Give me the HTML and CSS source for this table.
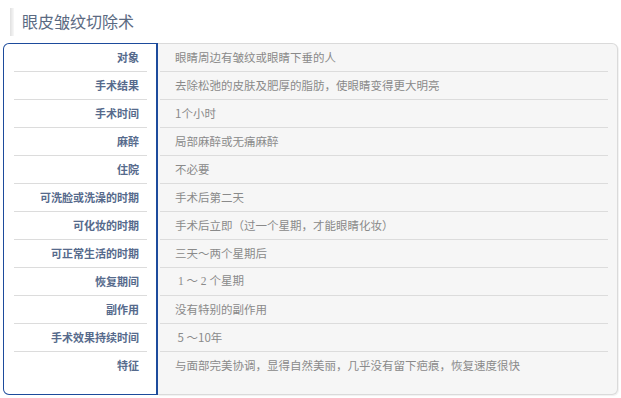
FILE: index.html
```html
<!DOCTYPE html>
<html lang="zh-CN">
<head>
<meta charset="utf-8">
<title>眼皮皱纹切除术</title>
<link rel="stylesheet" href="styles.css">
</head>
<body>
<div class="page">
  <h1 class="title">眼皮皱纹切除术</h1>
  <div class="card">
    <div class="labels">
      <div class="cell">对象</div>
      <div class="cell">手术结果</div>
      <div class="cell">手术时间</div>
      <div class="cell">麻醉</div>
      <div class="cell">住院</div>
      <div class="cell">可洗脸或洗澡的时期</div>
      <div class="cell">可化妆的时期</div>
      <div class="cell">可正常生活的时期</div>
      <div class="cell">恢复期间</div>
      <div class="cell">副作用</div>
      <div class="cell">手术效果持续时间</div>
      <div class="cell last">特征</div>
    </div>
    <div class="values">
      <div class="cell">眼睛周边有皱纹或眼睛下垂的人</div>
      <div class="cell">去除松弛的皮肤及肥厚的脂肪，使眼睛变得更大明亮</div>
      <div class="cell">1个小时</div>
      <div class="cell">局部麻醉或无痛麻醉</div>
      <div class="cell">不必要</div>
      <div class="cell">手术后第二天</div>
      <div class="cell">手术后立即（过一个星期，才能眼睛化妆）</div>
      <div class="cell">三天～两个星期后</div>
      <div class="cell serif">&nbsp;1 ～ 2 个星期</div>
      <div class="cell">没有特别的副作用</div>
      <div class="cell">&nbsp;5 ～10年</div>
      <div class="cell last">与面部完美协调，显得自然美丽，几乎没有留下疤痕，恢复速度很快</div>
    </div>
  </div>
</div>
</body>
</html>
```

FILE: styles.css
```css
* { box-sizing: border-box; }
html, body {
  margin: 0;
  padding: 0;
  background: #ffffff;
}
body {
  font-family: "Noto Sans CJK SC", "Noto Sans", sans-serif;
  width: 621px;
  height: 398px;
  overflow: hidden;
}
.page {
  padding: 0 3px 0 3px;
}
.title {
  position: relative;
  margin: 0;
  height: 43px;
  padding: 11px 0 0 19px;
  font-size: 16px;
  line-height: 20px;
  font-weight: normal;
  color: #5b6a82;
}
.title::before {
  content: "";
  position: absolute;
  left: 7px;
  top: 8px;
  width: 4px;
  height: 28px;
  background: linear-gradient(to right, #e0e0e0, #f8f8f8);
}
.card {
  display: flex;
  width: 615px;
  height: 352px;
}
.labels {
  width: 155px;
  flex: none;
  background: #ffffff;
  border: 1px solid #1d4b9c;
  border-right-width: 2px;
  border-radius: 6px 0 0 6px;
  padding: 0 9px 0 10px;
}
.labels .cell {
  height: 28px;
  border-bottom: 1px solid #dcdcdc;
  text-align: right;
  padding-right: 8px;
  font-size: 11px;
  line-height: 27px;
  font-weight: bold;
  color: #566a8c;
}
.values {
  flex: 1;
  background: #f6f6f6;
  border: 1px solid #dadada;
  border-left: none;
  border-radius: 0 6px 6px 0;
  box-shadow: 1px 1px 1px rgba(0,0,0,0.06);
  padding: 0 9px 0 2px;
}
.values .cell {
  height: 28px;
  border-bottom: 1px solid #dcdcdc;
  padding-left: 15px;
  font-size: 11.5px;
  line-height: 27px;
  color: #8a8a8a;
  white-space: nowrap;
}
.cell.last { border-bottom: none; }
.values .serif {
  font-family: "Liberation Serif", "Noto Sans CJK SC", serif;
}
```
